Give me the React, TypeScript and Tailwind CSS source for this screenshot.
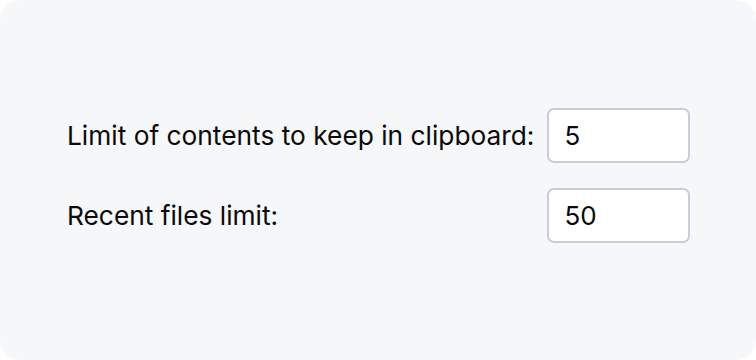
export default function App() {
  return (
    <div className="w-[756px] h-[360px] bg-white">
      <div
        className="w-full h-full bg-[#f6f7f9] rounded-[20px] flex justify-start pl-[67px] pt-[108px]"
        style={{ fontFamily: 'Inter, "Noto Sans", sans-serif' }}
      >
        <div className="grid grid-cols-[auto_143px] gap-x-[13px] gap-y-[25px] items-center text-[26.3px] text-[#0a0a0a] h-fit">
          <div>Limit of contents to keep in clipboard:</div>
          <input
            defaultValue="5"
            className="h-[55px] w-[143px] rounded-[7px] border-2 border-[#cacdd8] bg-white px-[15px] text-[26px] text-[#0a0a0a] outline-none"
          />
          <div>Recent files limit:</div>
          <input
            defaultValue="50"
            className="h-[55px] w-[143px] rounded-[7px] border-2 border-[#cacdd8] bg-white px-[15px] text-[26px] text-[#0a0a0a] outline-none"
          />
        </div>
      </div>
    </div>
  );
}
